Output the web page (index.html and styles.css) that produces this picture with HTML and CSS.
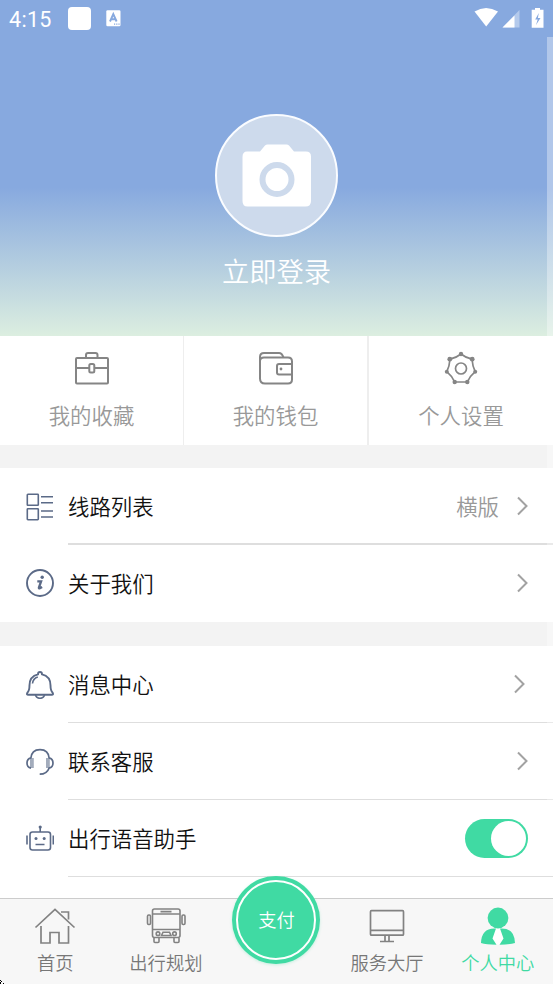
FILE: index.html
```html
<!DOCTYPE html>
<html lang="zh-CN">
<head>
<meta charset="utf-8">
<title>个人中心</title>
<link rel="stylesheet" href="styles.css">
</head>
<body>
<div class="app">
  <header class="hero">
    <div class="status">
      <span class="clock">4:15</span>
      <span class="notice"></span>
      <svg class="lang" width="15" height="17" viewBox="0 0 15 17"><rect x=".3" y=".3" width="14.2" height="16" rx="1.3" fill="#fff"/><path d="M4 11.5 7.3 4l3.3 7.5M5.2 9.2h4.2" fill="none" stroke="#87a9df" stroke-width="1.900"/><path d="M8 14.2h1.2m1 0h1.2m1 0h1.2" stroke="#87a9df" stroke-width="1.2"/></svg>
      <svg class="signals" width="71" height="22" viewBox="0 0 71 22"><path d="M.5 4.500Q12-2.500 24 4.500L12.200 19.500Z" fill="#fff"/><path d="M28.500 20.500 45.500 3v17.500z" fill="#b4caec"/><path d="M28.500 20.500 40.500 8.500v12z" fill="#fff"/><path d="M61 1h5v1.700h3.500v18H57.700v-18H61z" fill="#fff"/><path d="M64.800 6 61.200 12.500h2.500L62 18l4.500-7h-2.600z" fill="#87a9df"/></svg>
    </div>
    <div class="avatar">
      <svg width="70" height="64" viewBox="0 0 70 64"><path d="M5 7.500h13l5-6q1-1 2.500-1h19q1.500 0 2.500 1l5 6h12q5 0 5 5V57q0 5.500-5.500 5.500h-58Q.5 62.500.5 57V13q0-5.500 4.500-5.500z" fill="#fff"/><circle cx="35" cy="35.500" r="14.500" fill="none" stroke="#cddaec" stroke-width="6"/></svg>
    </div>
    <div class="login">立即登录</div>
  </header>

  <nav class="shortcuts">
    <div class="shortcut">
      <svg width="36" height="34" viewBox="0 0 36 34"><g fill="none" stroke="#858585" stroke-width="2"><rect x="2" y="7" width="32" height="25.500" rx="1"/><path d="M12 7V4q0-2 2-2h7.500q2 0 2 2v3M2 17h13m5.500 0H34"/><rect x="15.300" y="13" width="5" height="8.500" rx="1.500"/></g></svg>
      <span>我的收藏</span>
    </div>
    <div class="shortcut">
      <svg width="36" height="34" viewBox="0 0 36 34"><g fill="none" stroke="#858585" stroke-width="2"><path d="M2 9v18.500q0 5 5 5h23q4 0 4-4V10.500q0-4-4-4H6Q2 6.500 2 10"/><path d="M2 11V6q0-4 4-4h15q3 0 4.500 4.500M34 13H21q-2 0-2 2v6.500q0 2 2 2h13"/></g><circle cx="23" cy="18" r="1.400" fill="#858585"/></svg>
      <span>我的钱包</span>
    </div>
    <div class="shortcut">
      <svg width="36" height="34" viewBox="0 0 36 34"><g fill="none" stroke="#858585" stroke-width="1.700"><path d="M18 3Q23 7 29 8.200 29.500 15 32.200 20.700 27 25 24.300 31H11.700Q9 25 3.800 20.700 6.500 15 7 8.200 13 7 18 3z"/><circle cx="18" cy="17.500" r="5.500"/></g><g fill="#858585"><circle cx="18" cy="3" r="2.200"/><circle cx="6.800" cy="8.200" r="2.400"/><circle cx="29.200" cy="8.200" r="2.400"/><circle cx="3.800" cy="20.700" r="2"/><circle cx="32.200" cy="20.700" r="2"/><circle cx="11.700" cy="31" r="2.200"/><circle cx="24.300" cy="31" r="2.200"/></g></svg>
      <span>个人设置</span>
    </div>
  </nav>

  <section class="group">
    <div class="row">
      <svg class="icon" width="28" height="28" viewBox="0 0 28 28"><g fill="none" stroke="#5b6a87" stroke-width="1.600"><rect x="1.300" y="1.300" width="11" height="11" rx=".6"/><rect x="1.300" y="15.700" width="11" height="11" rx=".6"/><path d="M15 3.700h12M15 9.700h12M15 18h12M15 24h12"/></g></svg>
      <div class="body thick"><span>线路列表</span><span class="value">横版</span><svg class="chev" width="13" height="20" viewBox="0 0 13 20"><path d="m2 1.500 8.500 8.500L2 18.500"/></svg></div>
    </div>
    <div class="row short">
      <svg class="icon" width="28" height="28" viewBox="0 0 28 28"><circle cx="14" cy="14" r="13" fill="none" stroke="#5b6a87" stroke-width="1.900"/><circle cx="16.200" cy="8.300" r="1.700" fill="#5b6a87"/><path d="M11.300 12.300h3.800L12.900 18.500q-.2 1.200 1 .7l2.200-1.300" fill="none" stroke="#5b6a87" stroke-width="2.300"/></svg>
      <div class="body last"><span>关于我们</span><svg class="chev" width="13" height="20" viewBox="0 0 13 20"><path d="m2 1.500 8.500 8.500L2 18.500"/></svg></div>
    </div>
  </section>

  <section class="group more">
    <div class="row">
      <svg class="icon" width="28" height="28" viewBox="0 0 28 28"><g fill="none" stroke="#5b6a87" stroke-width="1.900"><path d="M12 3.300Q12 1 14 1t2 2.300q8.500 2 8.500 11 0 5.500 2.200 7.500 1 2-1 2H2.300q-2 0-1-2 2.200-2 2.200-7.500 0-9 8.500-11z"/><path d="M9.500 24q1 3.300 4.500 3.300t4.500-3.300M6.500 12.500q.5-5 5.300-6.500" stroke-width="1.600"/></g></svg>
      <div class="body"><span>消息中心</span><svg class="chev inset" width="13" height="20" viewBox="0 0 13 20"><path d="m2 1.500 8.500 8.500L2 18.500"/></svg></div>
    </div>
    <div class="row">
      <svg class="icon" width="28" height="28" viewBox="0 0 28 28"><path d="M5 10v10m1.800-10v10M21 10v10m1.800-10v10" stroke="#a3acbc" stroke-width="2"/><g fill="none" stroke="#5b6a87" stroke-width="1.700"><path d="M4.800 10.500Q5.500 1.700 14 1.700t9.200 8.800M5 9.800q-4 .8-4 5.200t4 5.200M23 9.800q4 .8 4 5.200t-4 5.200q-2 6-9.300 6"/></g></svg>
      <div class="body"><span>联系客服</span><svg class="chev" width="13" height="20" viewBox="0 0 13 20"><path d="m2 1.500 8.500 8.500L2 18.500"/></svg></div>
    </div>
    <div class="row">
      <svg class="icon" width="28" height="28" viewBox="0 0 28 28"><g fill="none" stroke="#5b6a87" stroke-width="1.600"><rect x="4" y="7" width="20.500" height="18" rx="2.500"/><path d="M14.200 7V2M1 10.500v9M27.300 10.500v9M9.500 19.500h9"/></g><g fill="#5b6a87"><circle cx="14.200" cy="2" r="1.600"/><circle cx="10" cy="13.500" r="1.500"/><circle cx="18.200" cy="13.500" r="1.500"/></g></svg>
      <div class="body"><span>出行语音助手</span><span class="switch"></span></div>
    </div>
  </section>

  <footer class="tabs">
    <div class="tab">
      <svg width="42" height="38" viewBox="0 0 42 38"><g fill="none" stroke="#828282" stroke-width="1.700"><path d="M1.500 20.500 21 2.500l19.500 18M7 19v17h9V25.500h9V36h9.500V19M27 5h7.500v7.500"/></g></svg>
      <span>首页</span>
    </div>
    <div class="tab">
      <svg width="42" height="38" viewBox="0 0 42 38"><g fill="none" stroke="#828282" stroke-width="1.600"><rect x="7.500" y="2" width="27.500" height="28.500" rx="2"/><path d="M7.500 7H35M7.500 22.500H35M15.500 4.600h11M9 31v3.500q0 1 1 1h3q1 0 1-1V31M29 31v3.500q0 1 1 1h3q1 0 1-1V31M16.500 28.500l1.500-3.300h6.500l1.500 3.300z"/><rect x="2.500" y="8" width="3" height="9.500" rx="1.200"/><rect x="37" y="8" width="3" height="9.500" rx="1.200"/><circle cx="13" cy="26.700" r="1.800"/><circle cx="29.500" cy="26.700" r="1.800"/></g></svg>
      <span>出行规划</span>
    </div>
    <div class="tab"><div class="pay"><span>支付</span></div></div>
    <div class="tab">
      <svg width="42" height="38" viewBox="0 0 42 38"><g fill="none" stroke="#828282" stroke-width="1.700"><rect x="4.500" y="3.700" width="33" height="24.500" rx="1"/><path d="M4.500 23.300h33M19 28.200v6M23 28.200v6M14 34.500h14"/></g></svg>
      <span>服务大厅</span>
    </div>
    <div class="tab active">
      <svg width="42" height="38" viewBox="0 0 42 38"><path d="M18 21h6l3 10.500-3 6.200h-6l-3-6.200z" fill="#fff"/><g fill="#40daa3"><circle cx="21" cy="11" r="10.400"/><path d="M19 21.500Q4.500 20.500 4 36q5 1.700 15.500 1.700L15.500 31.500zM23 21.500q14.500-1 15 14.500-5 1.700-15.500 1.700l4-6.200z"/></g></svg>
      <span>个人中心</span>
    </div>
  </footer>

  <div class="scrollbar"></div>
  <svg class="corner" width="4" height="4" viewBox="0 0 4 4"><path d="M0 0h1v1H0zM0 2h1v2H0zM1 1h1v1H1zM3 3h1v1H3z"/></svg>
</div>
</body>
</html>
```
FILE: styles.css
```css
* { box-sizing: border-box; }
body { margin: 0; }
.app {
  position: relative;
  display: flex;
  flex-direction: column;
  width: 553px;
  height: 984px;
  overflow: hidden;
  background: #f3f3f3;
  font-family: "Noto Sans CJK SC", sans-serif;
  font-weight: 350;
  font-size: 21.4px;
  line-height: 30px;
  white-space: nowrap;
}
svg { display: block; flex: none; }

.hero {
  display: flex;
  flex-direction: column;
  align-items: center;
  flex: none;
  height: 336px;
  background: linear-gradient(#87a9df 0, #87a9df 187px, #dceee0 336px);
  color: #fff;
}
.status {
  display: flex;
  align-items: center;
  align-self: stretch;
  height: 37px;
  padding: 0 9px;
}
.clock {
  width: 59px;
  padding-top: 2px;
  font: 400 21.5px/36px Roboto, sans-serif;
  letter-spacing: .3px;
}
.notice { width: 23px; height: 23px; margin-right: 15px; border-radius: 4px; background: #fff; }
.signals { margin-left: auto; margin-right: -1px; margin-top: -1px; }
.avatar {
  display: flex;
  align-items: center;
  justify-content: center;
  width: 123px;
  height: 123px;
  margin-top: 77px;
  border: 2.5px solid #fafcff;
  border-radius: 50%;
  background: #cddaec;
}
.login { margin-top: 13px; font-size: 27.3px; line-height: 40px; }

.shortcuts { display: grid; grid-template-columns: 184px 185px 184px; flex: none; height: 109px; background: #fff; }
.shortcut {
  display: flex;
  flex-direction: column;
  align-items: center;
  gap: 15px;
  padding-top: 15px;
  border-right: 1px solid #eee;
  color: #999;
}
.shortcut:nth-child(2) { border-right-width: 2px; }
.shortcut:last-child { border-right: 0; }

.group { flex: none; margin-top: 23px; background: #fff; }
.group.more { flex: 1; margin-top: 24px; }
.row { display: flex; align-items: center; height: 77px; padding-left: 26px; }
.row.short { height: 76px; margin-bottom: 1px; }
.row.short .body { height: 76px; }
.icon { margin-right: 14px; }
.body {
  display: flex;
  align-items: center;
  flex: 1;
  height: 77px;
  padding-right: 24px;
  border-bottom: 1px solid #dedede;
  color: #111;
}
.body.thick { border-bottom-width: 2px; }
.body.last { border-bottom: 0; }
.value { margin-left: auto; margin-right: 17px; color: #999; }
.chev { margin-left: auto; fill: none; stroke: #a2a2a2; stroke-width: 2; }
.value + .chev { margin-left: 0; }
.chev.inset { margin-right: 3px; }
.switch {
  display: flex;
  justify-content: flex-end;
  width: 63px;
  height: 39px;
  margin-left: auto;
  margin-right: 1px;
  padding: 2px;
  border-radius: 20px;
  background: #40daa3;
}
.switch::after { content: ""; width: 35px; height: 35px; border-radius: 50%; background: #fff; }

.tabs {
  display: grid;
  grid-template-columns: repeat(5, 1fr);
  flex: none;
  height: 86px;
  border-top: 1px solid #ccc;
  background: #f7f7f7;
  color: #777;
  font-size: 18.3px;
  line-height: 26px;
}
.tab { display: flex; flex-direction: column; align-items: center; gap: 4px; padding-top: 8px; }
.tab.active { color: #40daa3; }
.pay {
  display: flex;
  flex: none;
  width: 88px;
  height: 88px;
  margin-top: -31px;
  padding: 4px;
  border-radius: 50%;
  background: #40daa3;
  box-shadow: 0 1px 3px #40daa344;
  color: #fff;
}
.pay span {
  display: flex;
  flex: 1;
  align-items: center;
  justify-content: center;
  padding-bottom: 2px;
  border: 2px solid #fff;
  border-radius: 50%;
}
.scrollbar { position: absolute; top: 37px; right: 0; width: 6px; height: 785px; background: #ffffff59; }
.corner { position: absolute; left: 0; bottom: 0; }
```
